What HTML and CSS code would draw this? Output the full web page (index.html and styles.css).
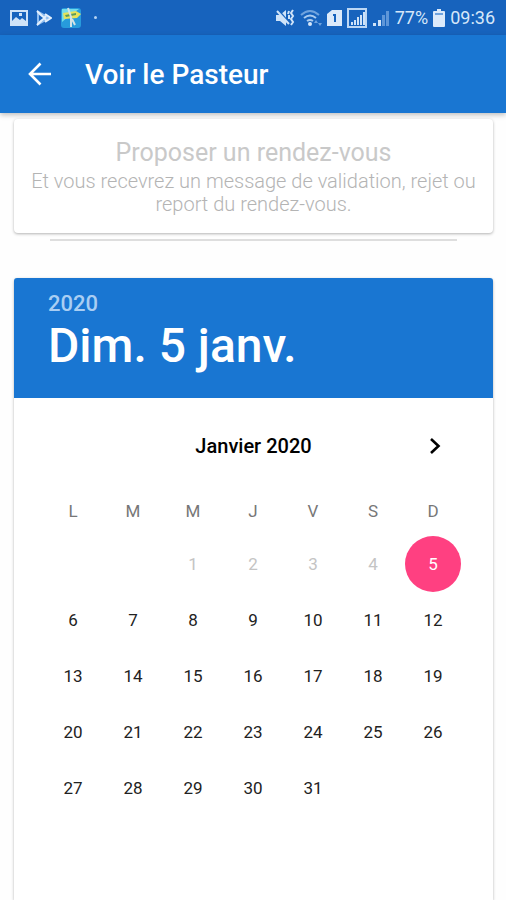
FILE: index.html
```html
<!DOCTYPE html>
<html lang="fr">
<head>
    <meta charset="UTF-8">
    <meta name="viewport" content="width=device-width, initial-scale=1.0">
    <title>Voir le Pasteur</title>
    <link rel="stylesheet" href="styles.css">
</head>
<body>
    <div class="status-bar">
        <div class="status-left">
            <svg width="18" height="18" viewBox="0 0 18 18">
                <path fill="#cfe3f8" fill-rule="evenodd" d="M0 1h18v16H0zM2 3v9l4-4 4 3 2-2 4 3V3zM9 4h3v3H9z"/>
            </svg>
            <svg width="16" height="18" viewBox="0 0 16 18">
                <path fill="#8fbdf0" d="M1 1l14 8-14 8z"/>
                <path fill="none" stroke="#e3effc" stroke-width="2" d="M1 2l9 9M1 16l9-9M9 5l6 4-6 4"/>
                <path fill="#1763bd" d="M3 6l4 3-4 3z"/>
            </svg>
            <svg width="22" height="22" viewBox="0 0 22 22">
                <rect x="1" y="1" width="20" height="20" rx="3" fill="#279bdc"/>
                <path fill="#74dbe8" d="M2 2h17L8 10 2 15z"/>
                <path fill="#e6e25a" d="M3 6l13-2 5 3-4 4-13 1z"/>
                <path fill="#5c9a58" d="M5 8l11-2v2L6 10z"/>
                <path fill="none" stroke="#d3e2e6" stroke-width="2" d="M8 1l3 9v10M12 12l3 6"/>
            </svg>
            <span class="dot"></span>
        </div>
        <div class="status-right">
            <svg width="20" height="18" viewBox="0 0 20 18">
                <path fill="#cfe3f8" d="M1 6h4l6-5v16l-6-5H1z"/>
                <path fill="none" stroke="#1763bd" stroke-width="2" d="M4 2l10 12"/>
                <path fill="none" stroke="#cfe3f8" stroke-width="2" d="M2 2l12 13M14 2l-1 3M18 1l-2 3 2 3-2 3 2 3-2 3M14 6v4"/>
            </svg>
            <svg width="22" height="18" viewBox="0 0 22 18">
                <g fill="none" stroke="#a9cbf0" stroke-width="2">
                    <path stroke="#6fa3de" d="M1 6q9-8 18 0"/>
                    <path d="M4 9q6-5 12 0M7 12q3-2 6 0"/>
                </g>
                <circle cx="10" cy="15" r="2" fill="#d6e7f9"/>
                <path fill="#6fa3de" d="M16 11l2 3h-4zM20 17l-2-3h4z"/>
            </svg>
            <svg width="15" height="18" viewBox="0 0 15 18">
                <path fill="#dceafa" d="M5 1h10v16H0V5z"/>
                <path fill="none" stroke="#1763bd" stroke-width="2" d="M6 6h2v7"/>
            </svg>
            <svg width="20" height="20" viewBox="0 0 20 20">
                <rect x="1" y="1" width="18" height="18" fill="none" stroke="#bdd8f5" stroke-width="2"/>
                <path fill="none" stroke="#cfe3f8" stroke-width="2" d="M5 17v-3M8 17v-5M11 17v-8M14 17V7M17 17V4"/>
            </svg>
            <svg width="18" height="18" viewBox="0 0 18 18">
                <path fill="#cfe3f8" d="M1 14h3v3H1zM6 11h3v6H6z"/>
                <path fill="#5e96d8" d="M10 6h3v11h-3zM14 2h3v15h-3z"/>
            </svg>
            <span>77%</span>
            <svg width="12" height="18" viewBox="0 0 12 18">
                <path fill="#dceafa" d="M4 0h4v2h3q1 0 1 1v14q0 1-1 1H1q-1 0-1-1V3q0-1 1-1h3z"/>
                <path fill="#6fa3de" d="M2 4h8v2H2z"/>
            </svg>
            <span>09:36</span>
        </div>
    </div>

    <header class="app-bar">
        <button type="button" class="back-btn" aria-label="Retour">
            <svg width="24" height="24" viewBox="0 0 24 24">
                <path fill="none" stroke="#fff" stroke-width="2.600" d="M23 12H2M12.500 1.500L2 12l10.500 10.500"/>
            </svg>
        </button>
        <h1>Voir le Pasteur</h1>
    </header>

    <main>
        <section class="card intro">
            <h2>Proposer un rendez-vous</h2>
            <p>Et vous recevrez un message de validation, rejet ou report du rendez-vous.</p>
        </section>
        <hr class="divider">

        <section class="card calendar">
            <div class="date-header">
                <div class="year">2020</div>
                <div class="date">Dim. 5 janv.</div>
            </div>
            <div class="month-bar">
                <h3>Janvier 2020</h3>
                <button type="button" class="next-btn" aria-label="Mois suivant">
                    <svg width="12" height="18" viewBox="0 0 12 18">
                        <path fill="none" stroke="#000" stroke-width="2.600" d="M2 2l7.500 7L2 16"/>
                    </svg>
                </button>
            </div>
            <table>
                <thead>
                    <tr><th>L</th><th>M</th><th>M</th><th>J</th><th>V</th><th>S</th><th>D</th></tr>
                </thead>
                <tbody>
                    <tr>
                        <td></td>
                        <td></td>
                        <td><button type="button" disabled>1</button></td>
                        <td><button type="button" disabled>2</button></td>
                        <td><button type="button" disabled>3</button></td>
                        <td><button type="button" disabled>4</button></td>
                        <td><button type="button" class="selected">5</button></td>
                    </tr>
                    <tr>
                        <td><button type="button">6</button></td>
                        <td><button type="button">7</button></td>
                        <td><button type="button">8</button></td>
                        <td><button type="button">9</button></td>
                        <td><button type="button">10</button></td>
                        <td><button type="button">11</button></td>
                        <td><button type="button">12</button></td>
                    </tr>
                    <tr>
                        <td><button type="button">13</button></td>
                        <td><button type="button">14</button></td>
                        <td><button type="button">15</button></td>
                        <td><button type="button">16</button></td>
                        <td><button type="button">17</button></td>
                        <td><button type="button">18</button></td>
                        <td><button type="button">19</button></td>
                    </tr>
                    <tr>
                        <td><button type="button">20</button></td>
                        <td><button type="button">21</button></td>
                        <td><button type="button">22</button></td>
                        <td><button type="button">23</button></td>
                        <td><button type="button">24</button></td>
                        <td><button type="button">25</button></td>
                        <td><button type="button">26</button></td>
                    </tr>
                    <tr>
                        <td><button type="button">27</button></td>
                        <td><button type="button">28</button></td>
                        <td><button type="button">29</button></td>
                        <td><button type="button">30</button></td>
                        <td><button type="button">31</button></td>
                        <td></td>
                        <td></td>
                    </tr>
                </tbody>
            </table>
        </section>
    </main>
</body>
</html>
```
FILE: styles.css
```css
* {
    box-sizing: border-box;
}
body {
    margin: 0;
    min-height: 100vh;
    display: flex;
    flex-direction: column;
    font-family: Roboto, sans-serif;
    background-color: #fefefe;
}
h1, h2, h3, p {
    margin: 0;
}
button {
    padding: 0;
    border: none;
    background: none;
    font-family: inherit;
    cursor: pointer;
}
svg {
    display: block;
}
.status-bar {
    display: flex;
    justify-content: space-between;
    align-items: center;
    height: 35px;
    padding: 0 11px 0 10px;
    background-color: #1763bd;
    color: #d6e7f9;
    font-size: 18px;
}
.status-left {
    display: flex;
    align-items: center;
    gap: 8px;
}
.status-right {
    display: flex;
    align-items: center;
    gap: 5px;
}
.dot {
    width: 3px;
    height: 3px;
    margin-left: 4px;
    border-radius: 50%;
    background-color: #b5d3f3;
}
.app-bar {
    display: flex;
    align-items: center;
    height: 78px;
    padding: 0 28px;
    gap: 33px;
    background-color: #1976d2;
    color: #fff;
    box-shadow: 0 2px 5px rgba(0, 0, 0, 0.25);
}
.app-bar h1 {
    font-size: 28px;
    font-weight: 500;
}
main {
    flex: 1;
    display: flex;
    flex-direction: column;
    padding: 6px 13px 0 14px;
}
.card {
    background-color: #fff;
    border-radius: 4px;
    box-shadow: 0 1px 3px rgba(0, 0, 0, 0.3);
}
.intro {
    padding: 17px 16px;
    text-align: center;
    color: #c9c9c9;
}
.intro h2 {
    font-size: 25px;
    line-height: 34px;
    font-weight: 400;
}
.intro p {
    font-size: 20px;
    line-height: 23px;
    font-weight: 300;
    color: #b4b4b4;
}
.divider {
    align-self: stretch;
    height: 2px;
    margin: 6px 36px 37px;
    border: none;
    background-color: #dedede;
}
.calendar {
    flex: 1;
    border-radius: 4px 4px 0 0;
}
.date-header {
    height: 120px;
    padding: 13px 34px;
    border-radius: 3px 3px 0 0;
    background-color: #1976d2;
    color: #fff;
    font-weight: 500;
}
.year {
    font-size: 22px;
    line-height: 26px;
    color: #a9cef3;
}
.date {
    font-size: 48px;
    line-height: 58px;
}
.month-bar {
    display: grid;
    grid-template-columns: 1fr auto 1fr;
    align-items: center;
    height: 96px;
    padding: 0 52px;
}
.month-bar h3 {
    grid-column: 2;
    font-size: 20px;
    font-weight: 500;
}
.next-btn {
    justify-self: end;
}
table {
    width: calc(100% - 59px);
    margin: 0 30px 0 29px;
    table-layout: fixed;
    border-collapse: collapse;
}
th {
    height: 42px;
    padding: 0 0 8px;
    font-size: 17px;
    font-weight: 400;
    color: #777;
}
td {
    height: 56px;
    padding: 0;
    text-align: center;
}
td button {
    width: 56px;
    height: 56px;
    border-radius: 50%;
    font-size: 17px;
    color: #222;
    vertical-align: top;
}
td button:disabled {
    color: #c4c4c4;
    cursor: default;
}
td .selected {
    background-color: #ff4081;
    color: #fff;
}
```
